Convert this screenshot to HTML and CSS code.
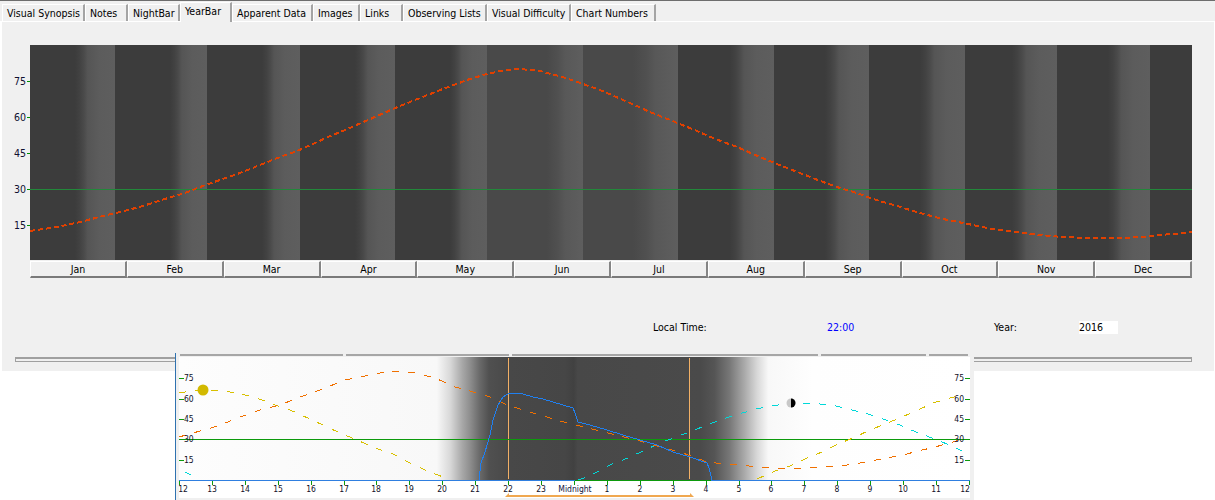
FILE: index.html
```html
<!DOCTYPE html>
<html lang="en">
<head>
<meta charset="utf-8">
<title>YearBar</title>
<link rel="stylesheet" href="styles.css">
</head>
<body>
<div class="topline"></div>
<nav class="tabs">
  <span class="tab">Visual Synopsis</span>
  <span class="tab">Notes</span>
  <span class="tab">NightBar</span>
  <span class="tab active">YearBar</span>
  <span class="tab">Apparent Data</span>
  <span class="tab">Images</span>
  <span class="tab">Links</span>
  <span class="tab">Observing Lists</span>
  <span class="tab">Visual Difficulty</span>
  <span class="tab">Chart Numbers</span>
</nav>
<main class="panel">
  <svg class="year-chart" width="1212" height="216" viewBox="1 45 1212 216">
    <defs>
      <linearGradient id="bandA">
        <stop offset="0" stop-color="#3c3c3c"/>
        <stop offset="0.12" stop-color="#424242"/>
        <stop offset="0.22" stop-color="#4a4a4a"/>
        <stop offset="0.32" stop-color="#555555"/>
        <stop offset="0.6" stop-color="#5c5c5c"/>
        <stop offset="1" stop-color="#5e5e5e"/>
      </linearGradient>
      <linearGradient id="bandB">
        <stop offset="0" stop-color="#494949"/>
        <stop offset="0.3" stop-color="#505050"/>
        <stop offset="0.5" stop-color="#585858"/>
        <stop offset="1" stop-color="#5e5e5e"/>
      </linearGradient>
    </defs>
    <rect class="night" x="30" y="45" width="1162" height="215"/>
    <rect class="night-soft" x="487" y="45" width="191" height="215"/>
    <rect class="band-a" x="75" y="45" width="40" height="215"/>
    <rect class="band-a" x="170" y="45" width="37" height="215"/>
    <rect class="band-a" x="262" y="45" width="38" height="215"/>
    <rect class="band-a" x="355" y="45" width="40" height="215"/>
    <rect class="band-a" x="450" y="45" width="37" height="215"/>
    <rect class="band-b" x="547" y="45" width="36" height="215"/>
    <rect class="band-b" x="633" y="45" width="45" height="215"/>
    <rect class="band-a" x="730" y="45" width="44" height="215"/>
    <rect class="band-a" x="825" y="45" width="44" height="215"/>
    <rect class="band-a" x="920" y="45" width="45" height="215"/>
    <rect class="band-a" x="1012" y="45" width="45" height="215"/>
    <rect class="band-a" x="1108" y="45" width="42" height="215"/>
    <line class="ref-line" x1="30" y1="189.5" x2="1192" y2="189.5"/>
    <polyline class="year-curve" points="30,231 57,227 80,222 103,216 120,212 143,206 168,198 185,193 200,187 217,181 240,173 265,163 280,157 297,151 313,144 328,137 345,130 400,106 425,96 448,87 470,79 487,74 505,70 520,69 540,71 566,78 583,84 600,90 630,103 650,112 680,124 697,131 713,138 737,147 760,157 777,164 800,173 823,182 840,188 857,193 873,199 897,206 920,213 943,219 968,224 992,229 1017,232 1040,235 1063,237 1088,238 1120,238 1143,237 1160,235 1185,233 1192,232"/>
    <g class="year-ticks">
      <line x1="27" y1="81.5" x2="30" y2="81.5"/>
      <line x1="27" y1="117.5" x2="30" y2="117.5"/>
      <line x1="27" y1="153.5" x2="30" y2="153.5"/>
      <line x1="27" y1="189.5" x2="30" y2="189.5"/>
      <line x1="27" y1="225.5" x2="30" y2="225.5"/>
    </g>
    <g class="year-labels">
      <text x="26" y="85">75</text>
      <text x="26" y="121">60</text>
      <text x="26" y="157">45</text>
      <text x="26" y="193">30</text>
      <text x="26" y="229">15</text>
    </g>
  </svg>
  <div class="months">
    <span class="month">Jan</span><span class="month">Feb</span><span class="month">Mar</span><span class="month">Apr</span><span class="month">May</span><span class="month">Jun</span><span class="month">Jul</span><span class="month">Aug</span><span class="month">Sep</span><span class="month">Oct</span><span class="month">Nov</span><span class="month">Dec</span>
  </div>
  <div class="info">
    <span class="info-local">Local Time:</span>
    <span class="info-time">22:00</span>
    <span class="info-year">Year:</span>
    <span class="info-box">2016</span>
  </div>
  <div class="slider"></div>
</main>

<section class="night-window">
  <div class="segments">
    <span class="seg seg-a"></span><span class="seg seg-b"></span><span class="seg seg-c"></span><span class="seg seg-d"></span><span class="seg seg-e"></span>
  </div>
  <svg class="night-chart" width="791" height="141" viewBox="179 357 791 141">
    <defs>
      <linearGradient id="dusk" gradientUnits="userSpaceOnUse" x1="179" y1="0" x2="970" y2="0">
        <stop offset="0" stop-color="#fdfdfd"/>
        <stop offset="0.326" stop-color="#f8f8f8"/>
        <stop offset="0.343" stop-color="#d8d8d8"/>
        <stop offset="0.358" stop-color="#a8a8a8"/>
        <stop offset="0.368" stop-color="#8e8e8e"/>
        <stop offset="0.38" stop-color="#6a6a6a"/>
        <stop offset="0.392" stop-color="#505050"/>
        <stop offset="0.418" stop-color="#484848"/>
        <stop offset="0.488" stop-color="#464646"/>
        <stop offset="0.499" stop-color="#414141"/>
        <stop offset="0.504" stop-color="#484848"/>
        <stop offset="0.659" stop-color="#4a4a4a"/>
        <stop offset="0.677" stop-color="#555555"/>
        <stop offset="0.696" stop-color="#777777"/>
        <stop offset="0.715" stop-color="#aaaaaa"/>
        <stop offset="0.731" stop-color="#d8d8d8"/>
        <stop offset="0.745" stop-color="#f8f8f8"/>
        <stop offset="0.8" stop-color="#fefefe"/>
        <stop offset="1" stop-color="#ffffff"/>
      </linearGradient>
    </defs>
    <rect class="dusk" x="179" y="357" width="791" height="123"/>
    <rect class="foot" x="179" y="481" width="791" height="17"/>
    <line class="twilight" x1="508.5" y1="358" x2="508.5" y2="479"/>
    <line class="twilight" x1="689.5" y1="358" x2="689.5" y2="479"/>
    <line class="alt-line" x1="179" y1="439.5" x2="970" y2="439.5"/>

    <polyline class="curve c-moon" points="185,472 193,476"/>
    <polyline class="curve c-moon" points="578,480 587,477 597,472 612,464 628,458 643,451 660,443 676,437 692,431 707,425 723,419 739,414 756,409 772,406 790,403 804,403 820,404 836,406 852,410 868,414 883,419 900,425 916,432 932,438 947,444 967,453"/>
    <polyline class="curve c-sun" points="179,393 192,391 203,390 215,390 230,392 250,396 265,401 278,406 290,410 310,419 325,426 340,433 357,440 375,448 393,454 410,463 425,470 443,477"/>
    <polyline class="curve c-sun" points="757,479 775,471 790,466 807,458 822,452 838,444 853,438 870,430 885,424 902,417 918,410 933,403 950,398 962,395"/>
    <polyline class="curve c-object" points="179,437 200,431 218,426 240,417 260,410 280,405 300,397 320,390 345,380 370,375 385,372 400,371 415,373 435,378 455,387 470,391 490,397 505,404 520,409 540,415 560,421 580,426 600,431 620,436 640,441 660,447 680,452 707,462 725,464 740,465 758,467 775,468 790,468 807,468 823,467 840,466 855,464 870,461 887,458 903,455 918,451 935,447 953,442 966,438"/>
    <polyline class="blue-curve" points="479,480 481,463 485,452 490,435 493,420 498,405 503,397 508,394 513,393 523,394 533,397 543,399 553,402 563,405 573,408 575,413 578,422 590,425 607,430 623,435 640,440 657,445 673,452 690,457 707,463 709,468 712,480"/>

    <circle class="sun" cx="203" cy="390" r="5.5"/>
    <circle class="moon" cx="791" cy="403" r="4.5"/>
    <path class="moon-dark" d="M791 398.5a4.5 4.5 0 0 1 0 9z"/>

    <line class="axis-blue" x1="179" y1="480.5" x2="575" y2="480.5"/>
    <line class="axis-green" x1="575" y1="480.5" x2="711" y2="480.5"/>
    <line class="axis-blue" x1="711" y1="480.5" x2="970" y2="480.5"/>

    <path class="ticks" d="M179.5 481v4M212.5 481v4M245.5 481v4M278.5 481v4M311.5 481v4M344.5 481v4M376.5 481v4M409.5 481v4M442.5 481v4M475.5 481v4M508.5 481v4M541.5 481v4M574.5 481v4M607.5 481v4M640.5 481v4M673.5 481v4M706.5 481v4M739.5 481v4M771.5 481v4M804.5 481v4M837.5 481v4M870.5 481v4M903.5 481v4M936.5 481v4M969.5 481v4"/>
    <path class="ticks" d="M179 378.5h5M179 399.5h5M179 419.5h5M179 460.5h5M965 378.5h5M965 399.5h5M965 419.5h5M965 460.5h5"/>

    <g class="alt-left">
      <text x="184" y="381">75</text>
      <text x="184" y="402">60</text>
      <text x="184" y="422">45</text>
      <text x="184" y="442">30</text>
      <text x="184" y="463">15</text>
    </g>
    <g class="alt-right">
      <text x="964" y="381">75</text>
      <text x="964" y="402">60</text>
      <text x="964" y="422">45</text>
      <text x="964" y="442">30</text>
      <text x="964" y="463">15</text>
    </g>
    <g class="hours">
      <text x="183" y="492">12</text>
      <text x="212" y="492">13</text>
      <text x="245" y="492">14</text>
      <text x="278" y="492">15</text>
      <text x="311" y="492">16</text>
      <text x="344" y="492">17</text>
      <text x="376" y="492">18</text>
      <text x="409" y="492">19</text>
      <text x="442" y="492">20</text>
      <text x="475" y="492">21</text>
      <text x="508" y="492">22</text>
      <text x="541" y="492">23</text>
      <text class="midnight" x="575" y="492">Midnight</text>
      <text x="607" y="492">1</text>
      <text x="640" y="492">2</text>
      <text x="673" y="492">3</text>
      <text x="706" y="492">4</text>
      <text x="739" y="492">5</text>
      <text x="771" y="492">6</text>
      <text x="804" y="492">7</text>
      <text x="837" y="492">8</text>
      <text x="870" y="492">9</text>
      <text x="903" y="492">10</text>
      <text x="936" y="492">11</text>
      <text x="965" y="492">12</text>
    </g>
    <path class="span-mark" d="M509 495h181v2h-181zM505 497l4-4v4zM694 497l-4-4v4z"/>
  </svg>
</section>
</body>
</html>
```
FILE: styles.css
```css
* { box-sizing: border-box; }
html, body { margin: 0; padding: 0; }
body {
  width: 1215px;
  height: 500px;
  overflow: hidden;
  background: #ffffff;
  font-family: "DejaVu Sans Condensed", "DejaVu Sans", sans-serif;
  font-stretch: condensed;
  font-size: 10.5px;
  color: #000000;
  position: relative;
}
.topline { height: 1px; background: #6d6d6d; }
.tabs {
  display: grid;
  grid-template-columns: 83px 43px 52px 52px 81px 47px 43px 84px 84px 85px;
  align-items: end;
  height: 21px;
  padding-left: 2px;
  background: #f0f0f0;
  border-bottom: 1px solid #ffffff;
}
.tab {
  height: 17px;
  padding: 1px 0 0 4px;
  line-height: 14px;
  white-space: nowrap;
  background: #f0f0f0;
  border-top: 1px solid #ffffff;
  border-left: 1px solid #ffffff;
  border-right: 2px solid #a4a4a4;
}
.tab.active {
  height: 20px;
  padding-top: 1px;
  margin-bottom: -1px;
  position: relative;
}
.panel {
  width: 1213px;
  height: 349px;
  margin-left: 1px;
  background: #f0f0f0;
  border-left: 1px solid #ffffff;
  padding-top: 23px;
}
.year-chart { display: block; margin-left: -1px; }
.night { fill: #3c3c3c; }
.night-soft { fill: #494949; }
.band-a { fill: url(#bandA); }
.band-b { fill: url(#bandB); }
.ref-line { stroke: #22883a; stroke-width: 1; }
.year-curve {
  fill: none;
  stroke: #e04000;
  stroke-width: 2;
  stroke-dasharray: 5 3;
  shape-rendering: crispEdges;
}
.year-ticks line { stroke: #009000; stroke-width: 1; }
.year-labels text {
  font-size: 10.5px;
  text-anchor: end;
  fill: #101030;
}
.months {
  display: grid;
  grid-template-columns: repeat(12, 1fr);
  width: 1162px;
  height: 15px;
  margin-left: 28px;
}
.month {
  text-align: center;
  line-height: 14px;
  background: #f0f0f0;
  border-top: 1px solid #ffffff;
  border-left: 1px solid #ffffff;
  border-right: 2px solid #858585;
  border-bottom: 2px solid #7a7a7a;
  white-space: nowrap;
}
.info {
  display: grid;
  grid-template-columns: 174px 167px 85px 39px;
  align-items: center;
  height: 13px;
  margin: 45px 0 0 651px;
  line-height: 13px;
}
.info-time { color: #0000ff; }
.info-box { background: #ffffff; height: 13px; }
.slider {
  width: 1177px;
  height: 5px;
  margin: 23px 0 0 13px;
  border: 1px solid #a0a0a0;
  border-top-width: 2px;
  background: #f0f0f0;
}

.night-window {
  position: absolute;
  left: 175px;
  top: 353px;
  width: 799px;
  height: 147px;
  padding-left: 3px;
  background: #f0f0f0;
  border-left: 1px solid #2f72b0;
}
.segments { display: flex; height: 4px; margin-left: 1px; }
.seg { display: block; height: 3px; margin-right: 3px; border-bottom: 2px solid #a6a6a6; }
.seg-a { width: 163px; }
.seg-b { width: 163px; }
.seg-c { width: 306px; }
.seg-d { width: 105px; }
.seg-e { width: 39px; }
.night-chart { display: block; }
.dusk { fill: url(#dusk); }
.foot { fill: #ffffff; }
.twilight { stroke: #f2b066; stroke-width: 1; }
.alt-line { stroke: #0c9a0c; stroke-width: 1; }
.curve {
  fill: none;
  stroke-width: 1;
  stroke-dasharray: 7 9;
  shape-rendering: crispEdges;
}
.c-moon { stroke: #00d8d8; }
.c-sun { stroke: #d8c000; }
.c-object { stroke: #f07000; }
.blue-curve { fill: none; stroke: #2080f0; stroke-width: 1; shape-rendering: crispEdges; }
.sun { fill: #d2b900; }
.moon { fill: #c8c8c8; }
.moon-dark { fill: #000000; }
.axis-blue { stroke: #2f7fe0; stroke-width: 1; }
.axis-green { stroke: #0c9a0c; stroke-width: 1; }
.ticks { fill: none; stroke: #0c9a0c; stroke-width: 1; }
.alt-left text, .alt-right text, .hours text {
  font-size: 8.5px;
  fill: #101028;
}
.alt-right text { text-anchor: end; }
.hours text { text-anchor: middle; }
.hours .midnight { fill: #0c1440; }
.span-mark { fill: #f0a850; }
```
